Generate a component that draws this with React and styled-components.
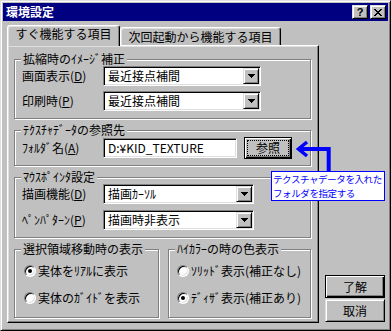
import React from 'react';
import styled, { createGlobalStyle, css } from 'styled-components';

const FONT = `"Noto Sans CJK JP", "Noto Sans", sans-serif`;

const GlobalStyle = createGlobalStyle`
  html, body { margin: 0; padding: 0; background: #c0c0c0; }
  body { font-family: ${FONT}; font-size: 12px; }
  * { box-sizing: border-box; }
`;

const raised = css`
  border: 1px solid;
  border-color: #dfdfdf #000 #000 #dfdfdf;
  box-shadow: inset 1px 1px #fff, inset -1px -1px #808080;
`;

const sunken = css`
  border: 1px solid;
  border-color: #808080 #fff #fff #808080;
  box-shadow: inset 1px 1px #000, inset -1px -1px #dfdfdf;
`;

const Window = styled.div`
  position: relative;
  width: 391px;
  height: 331px;
  background: #c0c0c0;
  ${raised}
  padding: 2px;
  display: flex;
  flex-direction: column;
  font-family: ${FONT};
  font-size: 12px;
  color: #000;
`;

const TitleBar = styled.div`
  height: 18px;
  flex: none;
  background: #000080;
  display: flex;
  align-items: center;
  padding: 0 2px;
`;

const TitleText = styled.div`
  flex: 1;
  color: #fff;
  font-weight: bold;
  font-size: 12px;
  line-height: 18px;
  padding-left: 1px;
`;

const CaptionButton = styled.div`
  width: 16px;
  height: 14px;
  background: #c0c0c0;
  ${raised}
  display: flex;
  align-items: center;
  justify-content: center;
  margin-left: ${p => p.$gap || 0}px;
  font-family: "Liberation Sans", sans-serif;
  font-weight: bold;
  font-size: 11px;
  line-height: 12px;
`;

const Body = styled.div`
  flex: 1;
  display: flex;
  padding: 4px 3px 5px 4px;
`;

const TabArea = styled.div`
  width: 312px;
  display: flex;
  flex-direction: column;
`;

const TabStrip = styled.div`
  display: flex;
  align-items: flex-end;
  height: 20px;
  flex: none;
  position: relative;
  z-index: 1;
`;

const Tab = styled.div`
  width: ${p => p.$w}px;
  height: ${p => (p.$active ? 21 : 18)}px;
  margin-bottom: ${p => (p.$active ? -1 : 0)}px;
  background: #c0c0c0;
  border: 1px solid;
  border-bottom: none;
  border-color: #fff #000 #000 #fff;
  border-radius: 3px 3px 0 0;
  box-shadow: inset -1px 0 #808080, inset 1px 1px #dfdfdf;
  display: flex;
  justify-content: center;
  padding-top: ${p => (p.$active ? 1 : 2)}px;
  line-height: 14px;
  white-space: nowrap;
`;

const Panel = styled.div`
  flex: 1;
  border: 1px solid;
  border-color: #fff #000 #000 #fff;
  box-shadow: inset -1px -1px #808080, inset 1px 1px #dfdfdf;
  padding: 13px 7px 0 6px;
  display: flex;
  flex-direction: column;
  gap: 11px;
`;

const Group = styled.div`
  position: relative;
  height: ${p => p.$h}px;
  width: ${p => (p.$w ? `${p.$w}px` : 'auto')};
  border: 1px solid #808080;
  box-shadow: inset 1px 1px #fff, 1px 1px #fff;
  padding: ${p => p.$pad};
  display: flex;
  flex-direction: column;
  gap: ${p => p.$gap || 0}px;
`;

const Legend = styled.span`
  position: absolute;
  left: 6px;
  top: -8px;
  padding: 0 2px;
  background: #c0c0c0;
  line-height: 14px;
  white-space: nowrap;
`;

const GroupPair = styled.div`
  display: flex;
  gap: 9px;
`;

const FieldRow = styled.div`
  display: flex;
  align-items: center;
  height: ${p => p.$h || 20}px;
`;

const FieldLabel = styled.span`
  width: 81px;
  white-space: nowrap;
  line-height: 14px;
`;

const Combo = styled.div`
  width: ${p => p.$w}px;
  height: 20px;
  ${sunken}
  background: #fff;
  padding: 1px;
  display: flex;
  align-items: center;
`;

const FieldText = styled.span`
  flex: 1;
  padding-left: 3px;
  line-height: 16px;
  white-space: nowrap;
  overflow: hidden;
`;

const ArrowButton = styled.span`
  width: 16px;
  height: 16px;
  background: #c0c0c0;
  ${raised}
  display: flex;
  align-items: center;
  justify-content: center;
`;

const TextBox = styled.div`
  width: ${p => p.$w}px;
  height: 20px;
  ${sunken}
  background: #fff;
  padding: 1px;
  display: flex;
  align-items: center;
`;

const PushButton = styled.div`
  width: ${p => p.$w}px;
  height: ${p => p.$h}px;
  margin-left: ${p => p.$ml || 0}px;
  background: #c0c0c0;
  display: flex;
  align-items: stretch;
  justify-content: center;
  padding: 2px 2px;
  line-height: 14px;
  ${p =>
    p.$default
      ? css`
          border: 1px solid #000;
          box-shadow: inset 1px 1px #fff, inset -1px -1px #000, inset -2px -2px #808080;
        `
      : raised}
`;

const FocusRect = styled.span`
  flex: 1;
  border: 1px dotted #000;
  display: flex;
  align-items: center;
  justify-content: center;
`;

const ButtonText = styled.span`
  flex: 1;
  display: flex;
  align-items: center;
  justify-content: center;
`;

const RadioRow = styled.div`
  display: flex;
  align-items: center;
  gap: 2px;
  height: 16px;
  white-space: nowrap;
  line-height: 14px;
`;

const RadioCircle = styled.span`
  width: 12px;
  height: 12px;
  flex: none;
  border-radius: 50%;
  background: #fff;
  border: 1px solid;
  border-color: #808080 #fff #fff #808080;
  box-shadow: inset 1px 1px #000, inset -1px -1px #dfdfdf;
  display: flex;
  align-items: center;
  justify-content: center;
  &::after {
    content: '';
    width: 4px;
    height: 4px;
    border-radius: 50%;
    background: #000;
    display: ${p => (p.$checked ? 'block' : 'none')};
  }
`;

const SideColumn = styled.div`
  margin-left: 6px;
  width: 60px;
  display: flex;
  flex-direction: column;
  justify-content: flex-end;
  gap: 1px;
  padding-bottom: 1px;
`;

const Callout = styled.div`
  position: absolute;
  left: 270px;
  top: 170px;
  width: 114px;
  height: 30px;
  background: #fff;
  border: 1px solid #0000ff;
  color: #0000ff;
  font-size: 9.5px;
  letter-spacing: -0.4px;
  padding: 0 0 0 1px;
  white-space: nowrap;
  overflow: hidden;
  z-index: 3;
`;

const CalloutLine = styled.div`
  height: 14px;
  line-height: 14px;
`;

const ArrowSvg = styled.svg`
  position: absolute;
  left: 293px;
  top: 137px;
  z-index: 2;
`;

const Underline = styled.u`
  text-decoration: underline;
  text-underline-offset: 1px;
`;

const closeGlyph = [
  [0, 0], [1, 0], [6, 0], [7, 0],
  [1, 1], [2, 1], [5, 1], [6, 1],
  [2, 2], [3, 2], [4, 2], [5, 2],
  [3, 3], [4, 3],
  [2, 4], [3, 4], [4, 4], [5, 4],
  [1, 5], [2, 5], [5, 5], [6, 5],
  [0, 6], [1, 6], [6, 6], [7, 6],
];

const CloseIcon = () => (
  <svg width="8" height="7" viewBox="0 0 8 7" shapeRendering="crispEdges">
    {closeGlyph.map(([x, y]) => (
      <rect key={`${x}-${y}`} x={x} y={y} width="1" height="1" fill="#000" />
    ))}
  </svg>
);

const DownArrow = () => (
  <svg width="7" height="4" viewBox="0 0 7 4" shapeRendering="crispEdges">
    <rect x="0" y="0" width="7" height="1" fill="#000" />
    <rect x="1" y="1" width="5" height="1" fill="#000" />
    <rect x="2" y="2" width="3" height="1" fill="#000" />
    <rect x="3" y="3" width="1" height="1" fill="#000" />
  </svg>
);

const ComboBox = ({ w, value }) => (
  <Combo $w={w}>
    <FieldText>{value}</FieldText>
    <ArrowButton>
      <DownArrow />
    </ArrowButton>
  </Combo>
);

const Radio = ({ checked, children }) => (
  <RadioRow>
    <RadioCircle $checked={checked} />
    <span>{children}</span>
  </RadioRow>
);

export default function App() {
  return (
    <>
      <GlobalStyle />
      <Window>
        <TitleBar>
          <TitleText>環境設定</TitleText>
          <CaptionButton>?</CaptionButton>
          <CaptionButton $gap={2}>
            <CloseIcon />
          </CaptionButton>
        </TitleBar>
        <Body>
          <TabArea>
            <TabStrip>
              <Tab $active $w={113}>すぐ機能する項目</Tab>
              <Tab $w={161}>次回起動から機能する項目</Tab>
            </TabStrip>
            <Panel>
              <Group $h={60} $pad="6px 0 0 7px" $gap={5}>
                <Legend>拡縮時のｲﾒｰｼﾞ補正</Legend>
                <FieldRow>
                  <FieldLabel>画面表示(<Underline>D</Underline>)</FieldLabel>
                  <ComboBox w={158} value="最近接点補間" />
                </FieldRow>
                <FieldRow>
                  <FieldLabel>印刷時(<Underline>P</Underline>)</FieldLabel>
                  <ComboBox w={158} value="最近接点補間" />
                </FieldRow>
              </Group>
              <Group $h={36} $pad="6px 0 0 7px">
                <Legend>ﾃｸｽﾁｬﾃﾞｰﾀの参照先</Legend>
                <FieldRow $h={22}>
                  <FieldLabel>ﾌｫﾙﾀﾞ名(<Underline>A</Underline>)</FieldLabel>
                  <TextBox $w={134}>
                    <FieldText>D:¥KID_TEXTURE</FieldText>
                  </TextBox>
                  <PushButton $w={48} $h={22} $ml={7} $default>
                    <FocusRect>参照</FocusRect>
                  </PushButton>
                </FieldRow>
              </Group>
              <Group $h={61} $pad="6px 0 0 7px" $gap={6}>
                <Legend>ﾏｳｽﾎﾟｲﾝﾀ設定</Legend>
                <FieldRow>
                  <FieldLabel>描画機能(<Underline>D</Underline>)</FieldLabel>
                  <ComboBox w={151} value="描画ｶｰｿﾙ" />
                </FieldRow>
                <FieldRow>
                  <FieldLabel>ﾍﾟﾝﾊﾟﾀｰﾝ(<Underline>P</Underline>)</FieldLabel>
                  <ComboBox w={151} value="描画時非表示" />
                </FieldRow>
              </Group>
              <GroupPair>
                <Group $h={69} $w={145} $pad="13px 0 0 9px" $gap={11}>
                  <Legend>選択領域移動時の表示</Legend>
                  <Radio checked>実体をﾘｱﾙに表示</Radio>
                  <Radio>実体のｶﾞｲﾄﾞを表示</Radio>
                </Group>
                <Group $h={69} $w={143} $pad="13px 0 0 8px" $gap={11}>
                  <Legend>ﾊｲｶﾗｰの時の色表示</Legend>
                  <Radio>ｿﾘｯﾄﾞ表示(補正なし)</Radio>
                  <Radio checked>ﾃﾞｨｻﾞ表示(補正あり)</Radio>
                </Group>
              </GroupPair>
            </Panel>
          </TabArea>
          <SideColumn>
            <PushButton $w={60} $h={23} $default>
              <ButtonText>了解</ButtonText>
            </PushButton>
            <PushButton $w={60} $h={23}>
              <ButtonText>取消</ButtonText>
            </PushButton>
          </SideColumn>
        </Body>
        <ArrowSvg width="42" height="36" viewBox="0 0 42 36">
          <path d="M6 11 H34.7 V36" fill="none" stroke="#0000ff" strokeWidth="4" strokeLinejoin="miter" />
          <path d="M13 4 L4.5 11 L13 18" fill="none" stroke="#0000ff" strokeWidth="3.5" strokeLinejoin="miter" />
        </ArrowSvg>
        <Callout>
          <CalloutLine>テクスチャデータを入れた</CalloutLine>
          <CalloutLine>フォルダを指定する</CalloutLine>
        </Callout>
      </Window>
    </>
  );
}
